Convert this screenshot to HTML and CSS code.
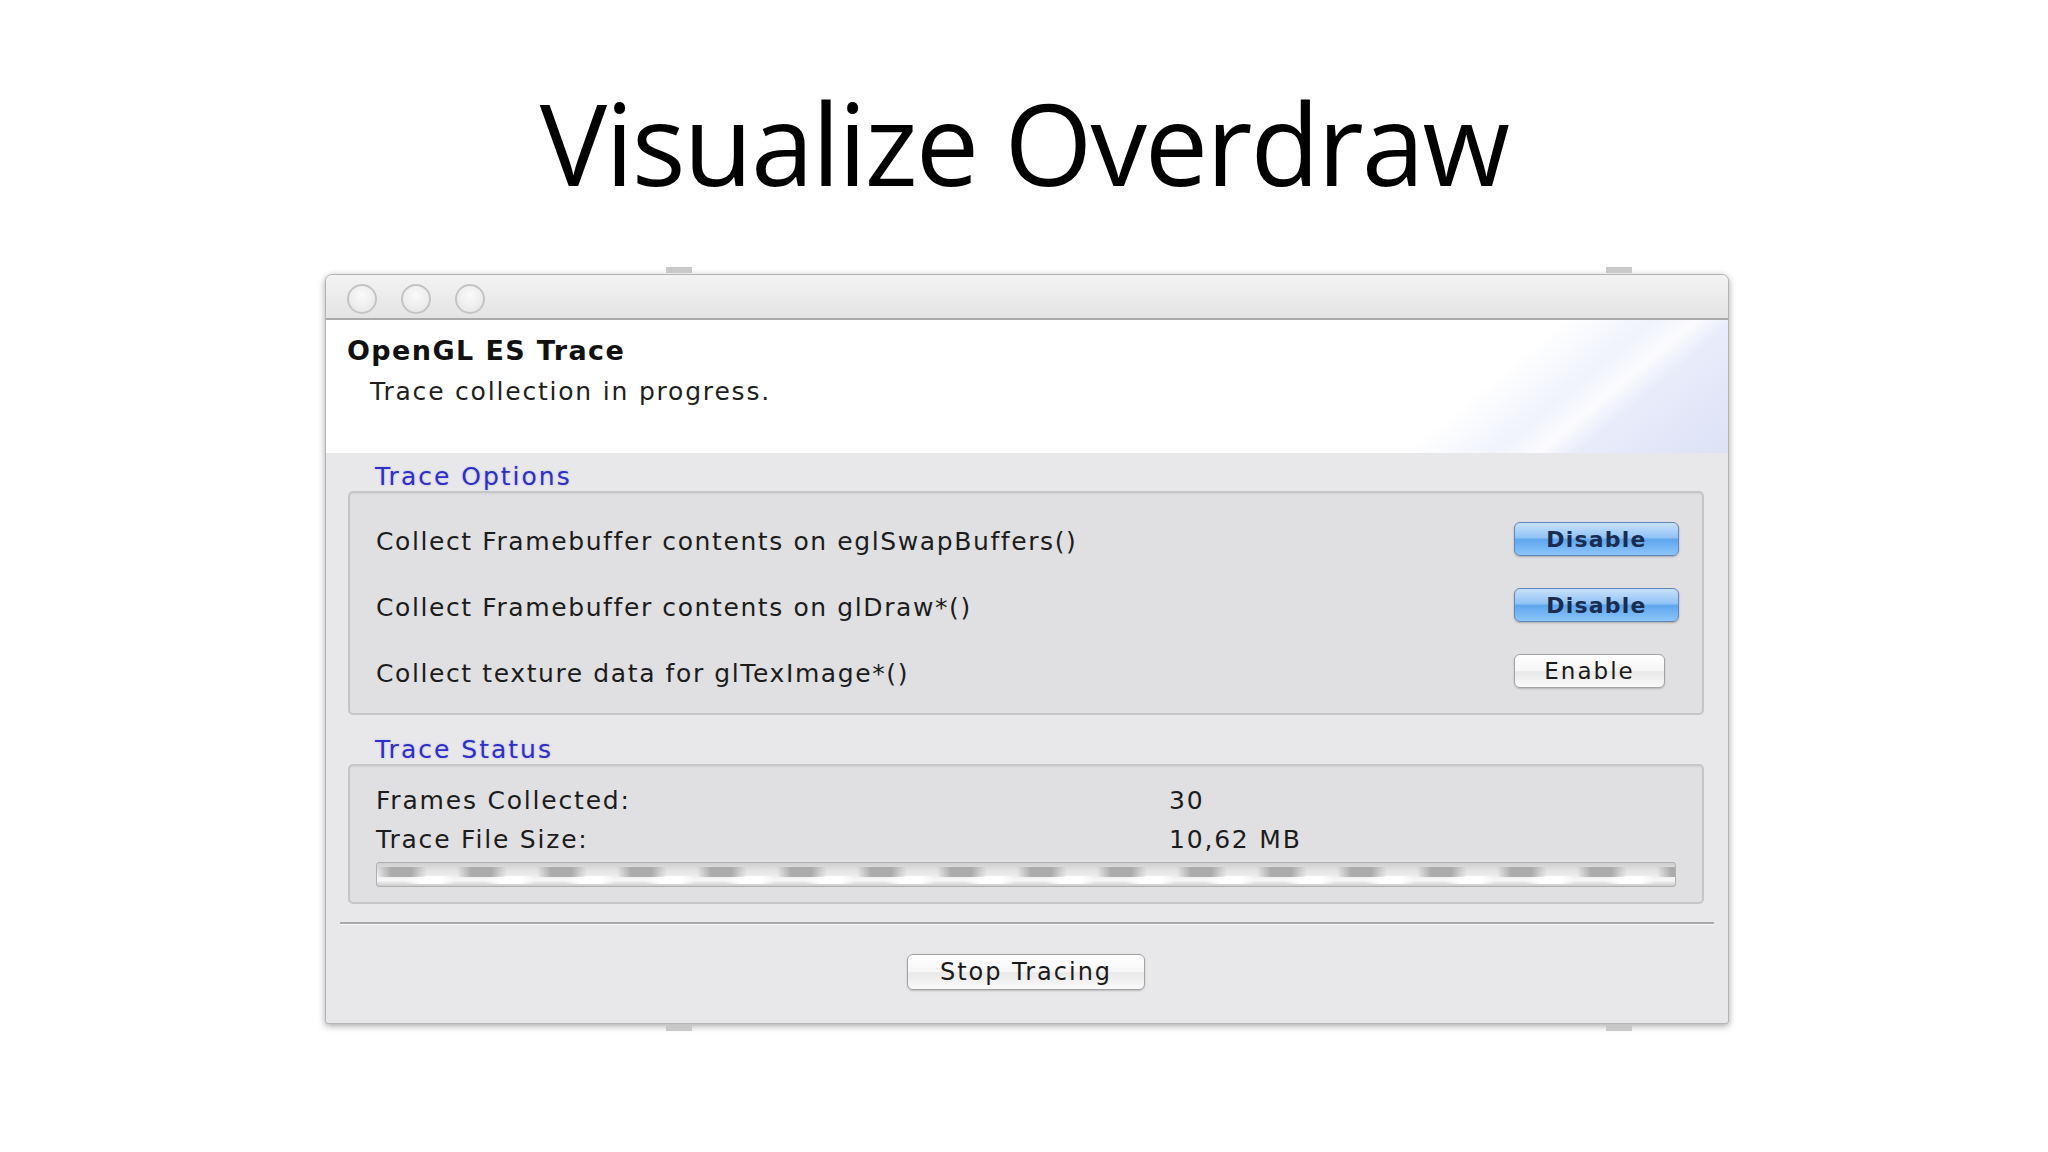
FILE: index.html
```html
<!DOCTYPE html>
<html>
<head>
<meta charset="utf-8">
<link rel="stylesheet" href="styles.css">
</head>
<body>
<div class="slide">
  <h1 class="title">Visualize Overdraw</h1>
  <div class="window">
    <span class="tab tab-tl"></span><span class="tab tab-tr"></span>
    <span class="tab tab-bl"></span><span class="tab tab-br"></span>
    <div class="titlebar">
      <span class="light"></span><span class="light"></span><span class="light"></span>
    </div>
    <div class="header">
      <div class="h-title">OpenGL ES Trace</div>
      <div class="h-sub">Trace collection in progress.</div>
    </div>
    <div class="body">
      <div class="group-label">Trace Options</div>
      <div class="group options">
        <div class="opt-text">Collect Framebuffer contents on eglSwapBuffers()</div>
        <div class="opt-btn"><button class="btn btn-blue">Disable</button></div>
        <div class="opt-text">Collect Framebuffer contents on glDraw*()</div>
        <div class="opt-btn"><button class="btn btn-blue">Disable</button></div>
        <div class="opt-text">Collect texture data for glTexImage*()</div>
        <div class="opt-btn"><button class="btn btn-white">Enable</button></div>
      </div>
      <div class="group-label second">Trace Status</div>
      <div class="group status">
        <div class="stat-row"><span class="stat-key">Frames Collected:</span><span class="stat-val">30</span></div>
        <div class="stat-row"><span class="stat-key">Trace File Size:</span><span class="stat-val">10,62 MB</span></div>
        <div class="progress"></div>
      </div>
      <div class="separator"></div>
      <div class="footer"><button class="btn btn-white btn-stop">Stop Tracing</button></div>
    </div>
  </div>
</div>
</body>
</html>
```
FILE: styles.css
```css
html, body {
  margin: 0;
  padding: 0;
  background: #ffffff;
}
.slide {
  width: 2048px;
  height: 1152px;
  overflow: hidden;
  background: #ffffff;
}
.title {
  margin: 0;
  padding-top: 86px;
  height: 192px;
  box-sizing: border-box;
  text-align: center;
  font-family: "Open Sans", "DejaVu Sans", sans-serif;
  font-weight: 400;
  font-size: 113px;
  line-height: 1;
  letter-spacing: -2px;
  color: #000000;
}
.window {
  position: relative;
  margin-top: 82px;
  margin-left: 325px;
  width: 1404px;
  height: 750px;
  box-sizing: border-box;
  border: 1px solid #b4b4b4;
  border-radius: 7px 7px 3px 3px;
  box-shadow: 0 2px 7px rgba(0, 0, 0, 0.35);
  background: #e8e7e9;
  display: flex;
  flex-direction: column;
  font-family: "DejaVu Sans", "Liberation Sans", sans-serif;
  color: #1c1c1c;
}
.tab {
  position: absolute;
  width: 26px;
  height: 6px;
  background: #c8c8c8;
}
.tab-tl { left: 340px; top: -8px; }
.tab-tr { left: 1280px; top: -8px; }
.tab-bl { left: 340px; bottom: -8px; }
.tab-br { left: 1280px; bottom: -8px; }
.titlebar {
  height: 45px;
  flex: none;
  box-sizing: border-box;
  border-bottom: 2px solid #a9a9a9;
  border-radius: 6px 6px 0 0;
  background: linear-gradient(#f3f3f3, #e4e4e4);
  display: flex;
  align-items: center;
  gap: 24px;
  padding-left: 21px;
  padding-top: 4px;
}
.light {
  width: 30px;
  height: 30px;
  border-radius: 50%;
  box-sizing: border-box;
  border: 2px solid #c4c4c4;
  background: radial-gradient(circle at 50% 35%, #fafafa, #e4e4e4);
}
.header {
  height: 133px;
  flex: none;
  box-sizing: border-box;
  padding-left: 21px;
  padding-top: 15px;
  background-color: #ffffff;
  background-image:
    linear-gradient(140deg, rgba(255,255,255,0) 0%, rgba(238,241,252,0) 42%, rgba(238,241,252,0.85) 58%, #fbfbfe 66%, rgba(232,236,250,1) 73%, #dce1f6 100%);
  background-size: 400px 133px;
  background-position: right top;
  background-repeat: no-repeat;
}
.h-title {
  font-weight: bold;
  font-size: 27px;
  line-height: 32px;
  letter-spacing: 1.4px;
  color: #111111;
}
.h-sub {
  margin-top: 10px;
  padding-left: 23px;
  font-size: 25px;
  line-height: 30px;
  letter-spacing: 1.8px;
  color: #1e1e1e;
}
.body {
  flex: 1;
  padding: 10px 24px 0 22px;
  display: flex;
  flex-direction: column;
}
.group-label {
  padding-left: 27px;
  font-size: 25px;
  line-height: 28px;
  letter-spacing: 2px;
  color: #2f2fc6;
  text-shadow: 0 0 2px rgba(90, 90, 255, 0.35);
}
.group-label.second {
  margin-top: 21px;
}
.group {
  margin-top: 0;
  box-sizing: border-box;
  border: 2px solid #c6c6c8;
  border-radius: 5px;
  background: #e0e0e2;
  box-shadow: inset 0 1px 2px rgba(0,0,0,0.06);
}
.options {
  height: 224px;
  display: grid;
  grid-template-columns: 1fr 188px;
  grid-auto-rows: 66px;
  align-items: center;
  padding: 13px 0 0 26px;
}
.opt-text {
  font-size: 25px;
  line-height: 28px;
  letter-spacing: 1.6px;
  padding-top: 6px;
}
.opt-btn {
  display: flex;
}
.btn {
  font-family: "DejaVu Sans", "Liberation Sans", sans-serif;
  font-size: 22px;
  height: 34px;
  box-sizing: border-box;
  border-radius: 6px;
  padding: 0;
  cursor: default;
}
.btn-blue {
  width: 165px;
  color: #1a2c50;
  font-weight: bold;
  letter-spacing: 1.2px;
  border: 1px solid #6185bd;
  background: linear-gradient(#c8e1fb 0%, #92c3f5 45%, #5fa6ee 52%, #8cc5fa 100%);
  box-shadow: 0 1px 2px rgba(0,0,0,0.25);
}
.btn-white {
  color: #1a1a1a;
  letter-spacing: 2px;
  border: 1px solid #a2a2a2;
  background: linear-gradient(#ffffff 0%, #f6f6f6 50%, #e8e8e8 52%, #fafafa 100%);
  box-shadow: 0 1px 2px rgba(0,0,0,0.2);
}
.opt-btn .btn-white {
  width: 151px;
  font-size: 23px;
}
.status {
  height: 140px;
  padding: 15px 26px 0 26px;
}
.stat-row {
  display: flex;
  font-size: 25px;
  line-height: 39px;
  letter-spacing: 1.8px;
}
.stat-key {
  width: 793px;
}
.progress {
  margin-top: 3px;
  height: 25px;
  box-sizing: border-box;
  border: 1px solid #b0b0b0;
  border-radius: 3px;
  background-color: #e4e4e4;
  background-image:
    repeating-linear-gradient(90deg, rgba(165,165,165,0) 0px, rgba(165,165,165,0.9) 14px, rgba(165,165,165,0.9) 34px, rgba(165,165,165,0) 50px, rgba(165,165,165,0) 80px),
    repeating-linear-gradient(90deg, rgba(255,255,255,0) 0px, rgba(255,255,255,0) 28px, #ffffff 44px, #ffffff 64px, rgba(255,255,255,0) 78px, rgba(255,255,255,0) 80px),
    linear-gradient(#cfcfcf, #e2e2e2 30%, #ececec 55%, #f8f8f8 75%, #cacaca);
  background-size: 100% 10px, 100% 8px, 100% 100%;
  background-position: 0 4px, 0 13px, 0 0;
  background-repeat: no-repeat;
}
.separator {
  margin: 18px -10px 0 -8px;
  height: 2px;
  background: #a9a9a9;
  border-bottom: 1px solid #f6f6f6;
}
.footer {
  display: flex;
  justify-content: center;
  padding-top: 29px;
}
.btn-stop {
  width: 238px;
  height: 36px;
  font-size: 24px;
}
```
